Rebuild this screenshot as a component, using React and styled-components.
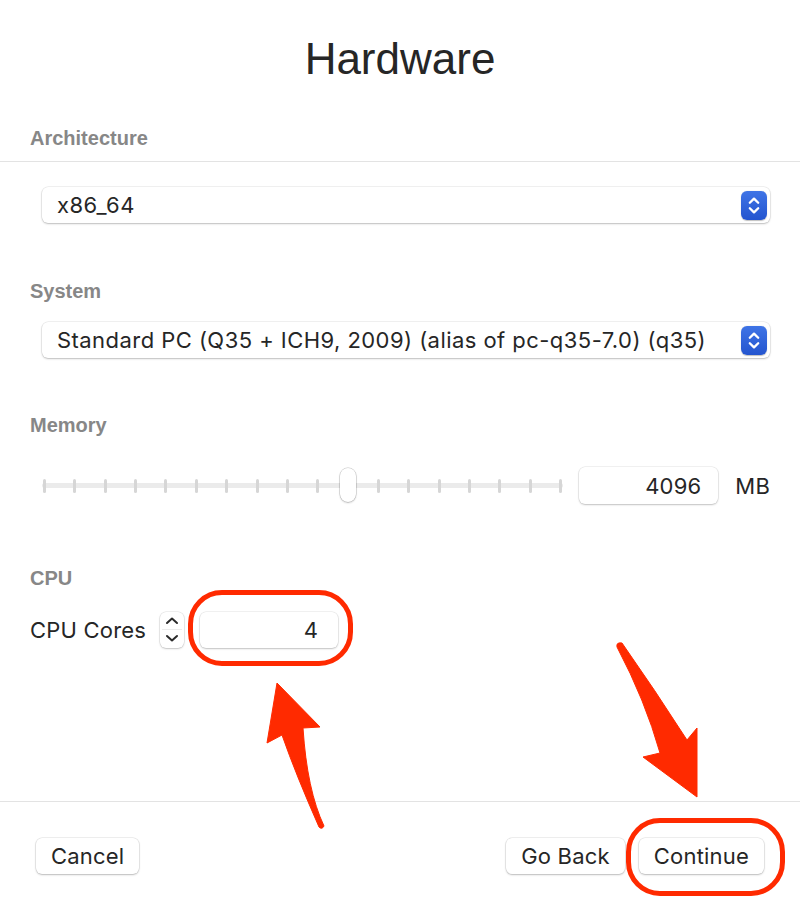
import React from 'react';
import styled, { createGlobalStyle } from 'styled-components';

const Global = createGlobalStyle`
  html, body { margin: 0; padding: 0; background: #ffffff; }
  body {
    font-family: "Liberation Sans", Arial, sans-serif;
    color: #262626;
    -webkit-font-smoothing: antialiased;
  }
`;

const RED = '#ff2a00';
const BODY_FONT = 'Inter, "Liberation Sans", Arial, sans-serif';

const Page = styled.div`
  position: relative;
  width: 800px;
  height: 908px;
  display: flex;
  flex-direction: column;
  background: #ffffff;
  overflow: hidden;
`;

const Title = styled.h1`
  margin: 0;
  padding-top: 37px;
  font-family: "Liberation Sans", Arial, sans-serif;
  font-size: 44px;
  line-height: 44px;
  font-weight: 400;
  text-align: center;
  color: #262626;
`;

const HeaderBar = styled.div`
  margin-top: 45px;
  padding: 0 30px 11px;
  border-bottom: 1px solid #e3e3e3;
`;

const SectionLabel = styled.div`
  font-family: "Liberation Sans", Arial, sans-serif;
  font-size: 20px;
  line-height: 24px;
  font-weight: 700;
  color: #878787;
`;

const Content = styled.div`
  flex: 1;
  display: flex;
  flex-direction: column;
  padding: 25px 30px 0;
`;

const Section = styled.section`
  display: flex;
  flex-direction: column;
  margin-top: ${(p) => p.$top || 0}px;
  gap: ${(p) => p.$gap || 0}px;
`;

const BodyText = styled.span`
  font-family: ${BODY_FONT};
  font-size: 22px;
  letter-spacing: ${(p) => (p.$wide ? 0.45 : 0.2)}px;
  color: #262626;
`;

const Popup = styled.div`
  margin-left: 12px;
  height: 36px;
  display: flex;
  align-items: center;
  justify-content: space-between;
  padding: 0 3px 0 15px;
  background: #ffffff;
  border-radius: 6px;
  box-shadow: 0 0 0 0.5px rgba(0, 0, 0, 0.1), 0 1px 2px rgba(0, 0, 0, 0.22);
`;

const PopupArrows = styled.span`
  width: 26px;
  height: 29px;
  border-radius: 6px;
  background: linear-gradient(#3f74e6, #2455cf);
  display: flex;
  align-items: center;
  justify-content: center;
  box-shadow: 0 0.5px 1px rgba(0, 0, 0, 0.25);
`;

const SliderRow = styled.div`
  display: flex;
  align-items: center;
  height: 37px;
  padding-left: 12px;
`;

const Slider = styled.div`
  position: relative;
  flex: 1;
  height: 37px;
  display: flex;
  align-items: center;
`;

const Rail = styled.div`
  flex: 1;
  height: 5px;
  border-radius: 3px;
  background: #ebebeb;
  display: flex;
  align-items: center;
  justify-content: space-between;
  padding: 0 1px;
`;

const Tick = styled.span`
  width: 3px;
  height: 14px;
  border-radius: 1.5px;
  background: #d6d6d6;
  flex: none;
`;

const Thumb = styled.span`
  position: absolute;
  top: 1px;
  width: 16px;
  height: 34px;
  margin-left: -8px;
  border-radius: 8px;
  background: #ffffff;
  box-shadow: 0 0 0 0.5px rgba(0, 0, 0, 0.22), 0 1px 2px rgba(0, 0, 0, 0.2);
`;

const NumberField = styled.div`
  position: relative;
  width: ${(p) => p.$w}px;
  height: ${(p) => p.$h}px;
  margin-left: ${(p) => p.$ml || 0}px;
  display: flex;
  align-items: center;
  justify-content: flex-end;
  padding-right: ${(p) => p.$pr || 6}px;
  box-sizing: border-box;
  background: #ffffff;
  border-radius: 6px;
  box-shadow: 0 0 0 0.5px rgba(0, 0, 0, 0.1), 0 1px 2px rgba(0, 0, 0, 0.2);
  flex: none;
`;

const Unit = styled(BodyText)`
  margin-left: 17px;
`;

const FieldRow = styled.div`
  display: flex;
  align-items: center;
  height: 36px;
`;

const Stepper = styled.div`
  margin-left: 14px;
  width: 24px;
  height: 36px;
  border-radius: 6px;
  background: #ffffff;
  box-shadow: 0 0 0 0.5px rgba(0, 0, 0, 0.12), 0 1px 2px rgba(0, 0, 0, 0.18);
  display: flex;
  flex: none;
`;

const Ring = styled.span`
  position: absolute;
  left: ${(p) => p.$l}px;
  right: ${(p) => p.$r}px;
  top: ${(p) => p.$t}px;
  bottom: ${(p) => p.$b}px;
  border: 5px solid ${RED};
  border-radius: 34px;
  pointer-events: none;
`;

const Footer = styled.footer`
  height: 107px;
  border-top: 1px solid #e3e3e3;
  display: flex;
  align-items: flex-start;
  padding: 36px 36px 0;
  box-sizing: border-box;
  gap: 14px;
`;

const Spacer = styled.div`
  flex: 1;
`;

const ButtonWrap = styled.div`
  position: relative;
  display: flex;
`;

const Button = styled.button`
  height: 36px;
  padding: 0 ${(p) => p.$px || 16}px;
  border: none;
  border-radius: 6px;
  background: #ffffff;
  box-shadow: 0 0 0 0.5px rgba(0, 0, 0, 0.12), 0 1px 2px rgba(0, 0, 0, 0.22);
  font-family: ${BODY_FONT};
  font-size: 22px;
  letter-spacing: 0.2px;
  color: #262626;
`;

const Overlay = styled.svg`
  position: absolute;
  left: 0;
  top: 0;
  pointer-events: none;
`;

function BlueArrows() {
  return (
    <PopupArrows>
      <svg width="26" height="29" viewBox="0 0 26 29">
        <path d="M8.8 11.8 L13 7.6 L17.2 11.8" fill="none" stroke="#fff" strokeWidth="2.3" strokeLinecap="round" strokeLinejoin="round" />
        <path d="M8.8 17.2 L13 21.4 L17.2 17.2" fill="none" stroke="#fff" strokeWidth="2.3" strokeLinecap="round" strokeLinejoin="round" />
      </svg>
    </PopupArrows>
  );
}

function StepperIcon() {
  return (
    <Stepper>
      <svg width="24" height="36" viewBox="0 0 24 36">
        <line x1="2" y1="17.5" x2="22" y2="17.5" stroke="#ececec" strokeWidth="1" />
        <path d="M7 11 L12 6.5 L17 11" fill="none" stroke="#2b2b2b" strokeWidth="2" strokeLinecap="round" strokeLinejoin="round" />
        <path d="M7 24 L12 28.5 L17 24" fill="none" stroke="#2b2b2b" strokeWidth="2" strokeLinecap="round" strokeLinejoin="round" />
      </svg>
    </Stepper>
  );
}

const TICKS = 18;
const memIndex = 10;

export default function App() {
  const thumbPct = (memIndex / (TICKS - 1)) * 100;
  return (
    <>
      <Global />
      <Page>
        <Title>Hardware</Title>
        <HeaderBar>
          <SectionLabel>Architecture</SectionLabel>
        </HeaderBar>
        <Content>
          <Popup>
            <BodyText $wide>x86_64</BodyText>
            <BlueArrows />
          </Popup>

          <Section $top={56} $gap={19}>
            <SectionLabel>System</SectionLabel>
            <Popup>
              <BodyText $wide>Standard PC (Q35 + ICH9, 2009) (alias of pc-q35-7.0) (q35)</BodyText>
              <BlueArrows />
            </Popup>
          </Section>

          <Section $top={55} $gap={30}>
            <SectionLabel>Memory</SectionLabel>
            <SliderRow>
              <Slider>
                <Rail>
                  {Array.from({ length: TICKS }).map((_, i) => (
                    <Tick key={i} />
                  ))}
                </Rail>
                <Thumb style={{ left: `calc(2.5px + (100% - 5px) * ${thumbPct / 100})` }} />
              </Slider>
              <NumberField $w={139} $h={37} $ml={16} $pr={17}>
                <BodyText>4096</BodyText>
              </NumberField>
              <Unit>MB</Unit>
            </SliderRow>
          </Section>

          <Section $top={62} $gap={22}>
            <SectionLabel>CPU</SectionLabel>
            <FieldRow>
              <BodyText>CPU Cores</BodyText>
              <StepperIcon />
              <NumberField $w={138} $h={36} $ml={16} $pr={20}>
                <BodyText>4</BodyText>
                <Ring $l={-12} $r={-15} $t={-22} $b={-18} />
              </NumberField>
            </FieldRow>
          </Section>
        </Content>
        <Footer>
          <Button $px={15}>Cancel</Button>
          <Spacer />
          <Button $px={15}>Go Back</Button>
          <ButtonWrap>
            <Button $px={15}>Continue</Button>
            <Ring $l={-13} $r={-21} $t={-20} $b={-22} />
          </ButtonWrap>
        </Footer>
        <Overlay width="800" height="908" viewBox="0 0 800 908">
          <path
            d="M277 683 L320 727 L303 728 Q307 790 324 826 Q322 830 319 827 Q296 775 282 735 L267 743 Z"
            fill={RED}
            stroke={RED}
            strokeWidth="1"
            strokeLinejoin="round"
          />
          <path
            d="M617 647 Q616 642 622 643 Q655 690 687 740 L697 728 L697 797 L643 757 L660 753 Q645 700 617 647 Z"
            fill={RED}
            stroke={RED}
            strokeWidth="1"
            strokeLinejoin="round"
          />
        </Overlay>
      </Page>
    </>
  );
}
